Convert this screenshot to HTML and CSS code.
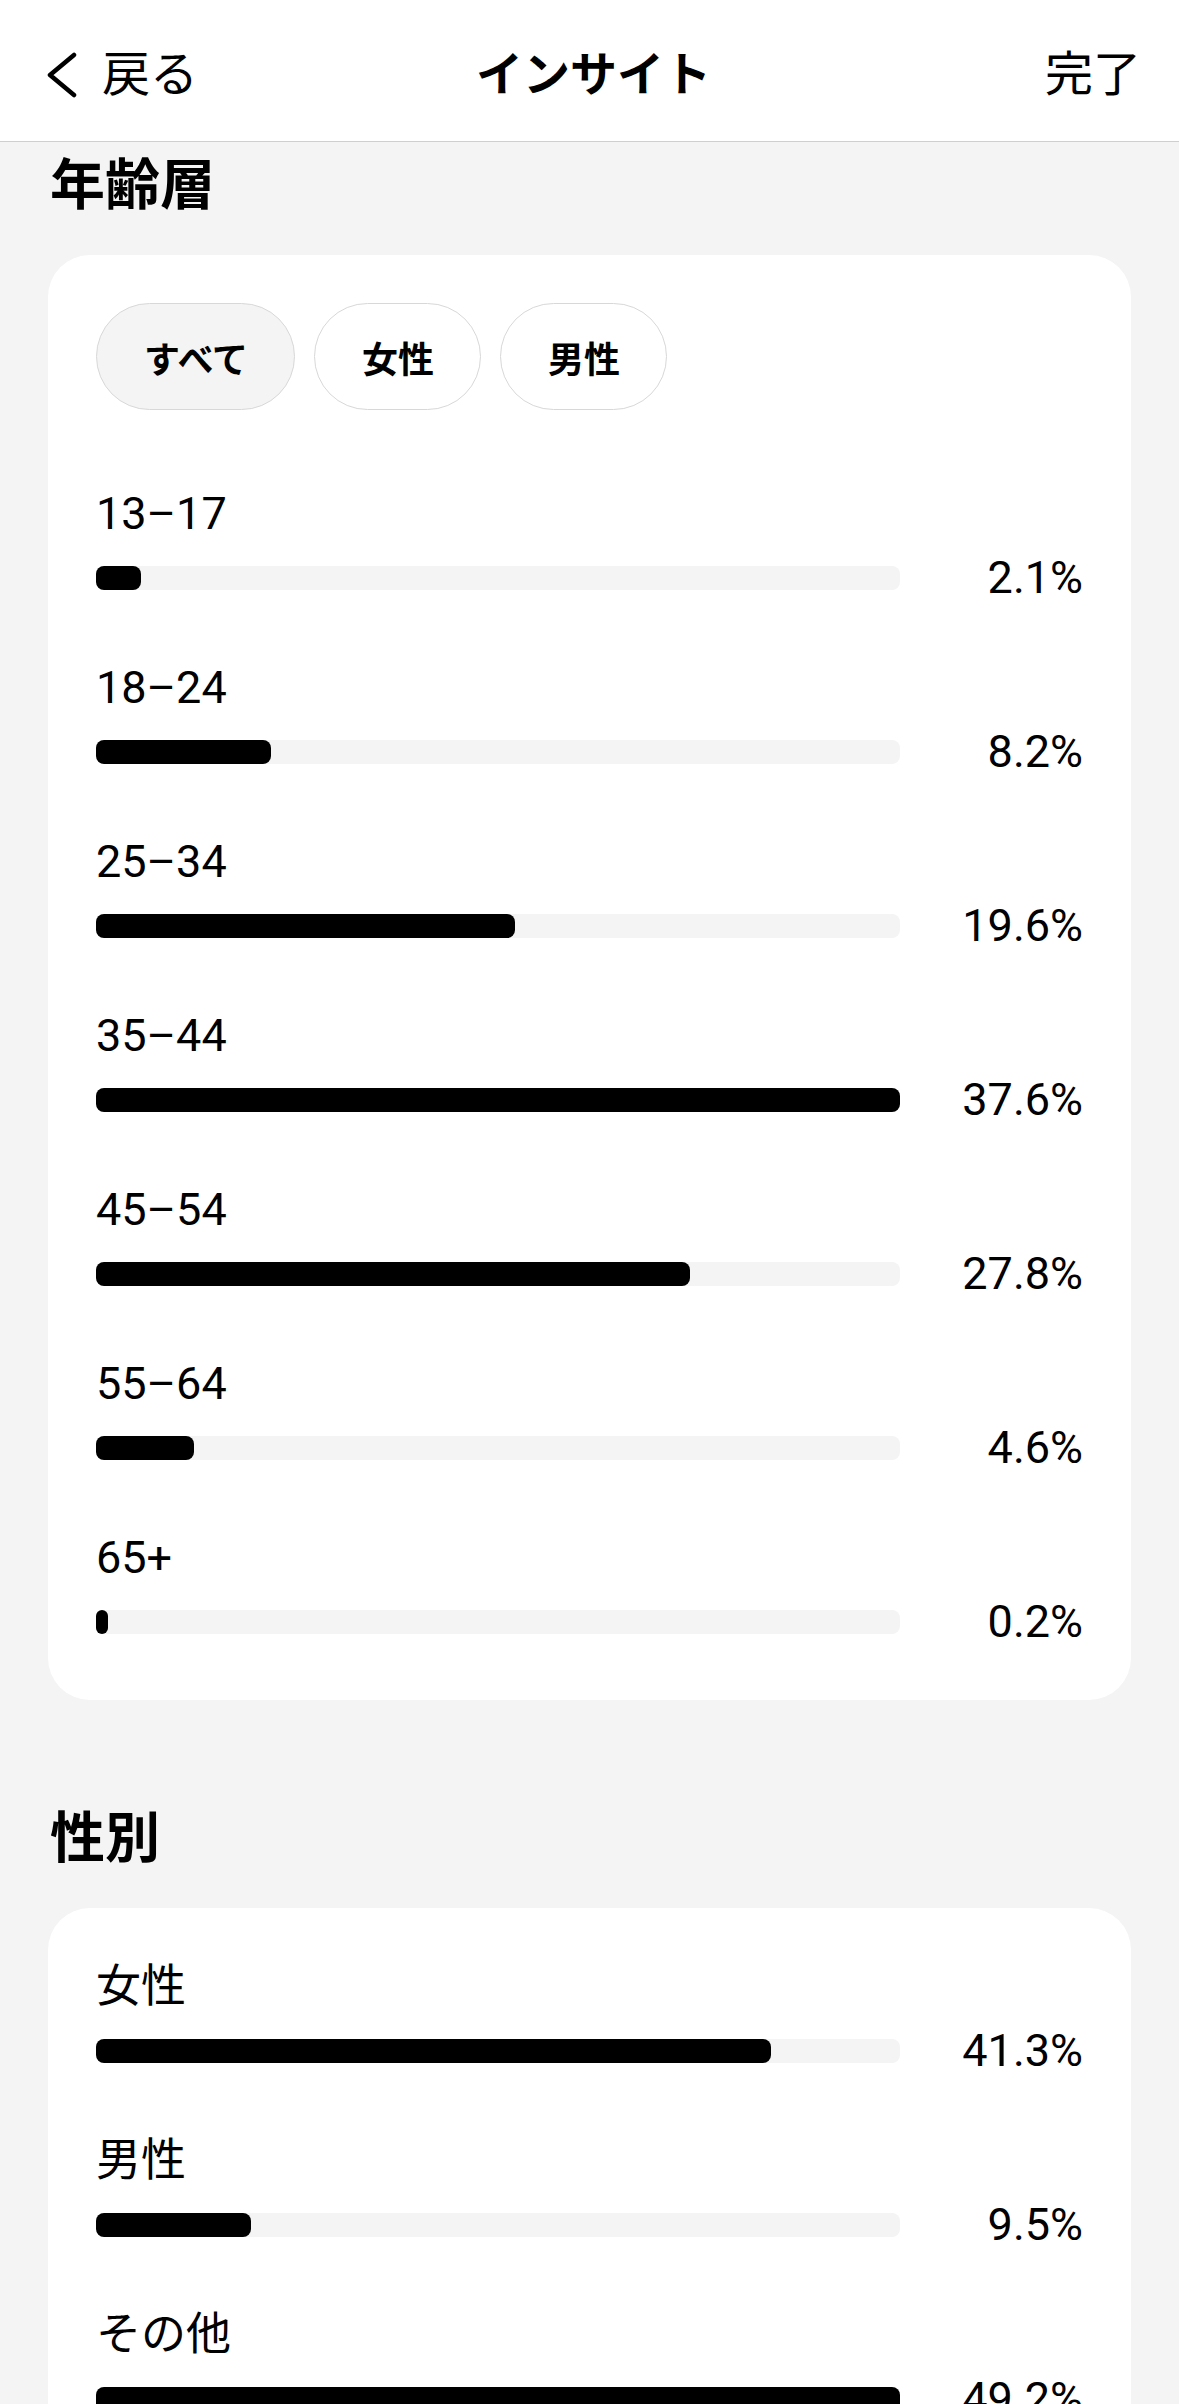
FILE: index.html
```html
<!DOCTYPE html>
<html lang="ja">
<head>
<meta charset="utf-8">
<title>インサイト</title>
<link rel="stylesheet" href="styles.css">
</head>
<body>
<div class="screen">
  <header class="nav">
    <div class="nav-left">
      <svg class="chev" width="32" height="46" viewBox="0 0 32 46" aria-hidden="true">
        <polyline points="28,3 4,23 28,43" fill="none" stroke="#000" stroke-width="4.5" stroke-linecap="round" stroke-linejoin="round"/>
      </svg>
      <span class="nav-back">戻る</span>
    </div>
    <div class="nav-title">インサイト</div>
    <div class="nav-right">完了</div>
  </header>

  <main class="content">
    <h2 class="section-title">年齢層</h2>
    <section class="card card-age">
      <div class="chips">
        <button class="chip chip-active">すべて</button>
        <button class="chip">女性</button>
        <button class="chip">男性</button>
      </div>
      <div class="rows">
        <div class="row">
          <div class="label">13–17</div>
          <div class="bar-row"><div class="track"><div class="fill" style="width:5.59%"></div></div><div class="pct">2.1%</div></div>
        </div>
        <div class="row">
          <div class="label">18–24</div>
          <div class="bar-row"><div class="track"><div class="fill" style="width:21.81%"></div></div><div class="pct">8.2%</div></div>
        </div>
        <div class="row">
          <div class="label">25–34</div>
          <div class="bar-row"><div class="track"><div class="fill" style="width:52.13%"></div></div><div class="pct">19.6%</div></div>
        </div>
        <div class="row">
          <div class="label">35–44</div>
          <div class="bar-row"><div class="track"><div class="fill" style="width:100%"></div></div><div class="pct">37.6%</div></div>
        </div>
        <div class="row">
          <div class="label">45–54</div>
          <div class="bar-row"><div class="track"><div class="fill" style="width:73.94%"></div></div><div class="pct">27.8%</div></div>
        </div>
        <div class="row">
          <div class="label">55–64</div>
          <div class="bar-row"><div class="track"><div class="fill" style="width:12.23%"></div></div><div class="pct">4.6%</div></div>
        </div>
        <div class="row">
          <div class="label">65+</div>
          <div class="bar-row"><div class="track"><div class="fill" style="width:0.53%"></div></div><div class="pct">0.2%</div></div>
        </div>
      </div>
    </section>

    <h2 class="section-title section-title-2">性別</h2>
    <section class="card card-gender">
      <div class="rows">
        <div class="row">
          <div class="label">女性</div>
          <div class="bar-row"><div class="track"><div class="fill" style="width:83.94%"></div></div><div class="pct">41.3%</div></div>
        </div>
        <div class="row">
          <div class="label">男性</div>
          <div class="bar-row"><div class="track"><div class="fill" style="width:19.31%"></div></div><div class="pct">9.5%</div></div>
        </div>
        <div class="row">
          <div class="label">その他</div>
          <div class="bar-row"><div class="track"><div class="fill" style="width:100%"></div></div><div class="pct">49.2%</div></div>
        </div>
      </div>
    </section>
  </main>
</div>
</body>
</html>
```

FILE: styles.css
```css
* { box-sizing: border-box; }

html, body {
  margin: 0;
  padding: 0;
}

body {
  background: #f4f4f4;
  color: #000;
  font-family: Roboto, "Noto Sans CJK JP", sans-serif;
}

.screen {
  height: 100vh;
  display: flex;
  flex-direction: column;
  overflow: hidden;
}

/* ---------- nav bar ---------- */
.nav {
  flex: 0 0 auto;
  height: 142px;
  background: #fff;
  border-bottom: 1px solid #cfcfcf;
  display: grid;
  grid-template-columns: 1fr auto 1fr;
  align-items: center;
  padding: 8px 38px 0 46px;
}

.nav-left {
  display: flex;
  align-items: center;
  gap: 24px;
}

.chev { display: block; }

.nav-back,
.nav-right {
  font-size: 48px;
  line-height: 56px;
  font-weight: 400;
}

.nav-right { justify-self: end; }

.nav-title {
  font-size: 47px;
  line-height: 56px;
  font-weight: 700;
  text-align: center;
}

/* ---------- content ---------- */
.content {
  flex: 1 1 auto;
  overflow: hidden;
  padding: 0 48px;
}

.section-title {
  margin: 13px 0 40px 2px;
  font-size: 55px;
  line-height: 60px;
  font-weight: 700;
}

.section-title-2 { margin-top: 108px; }

.card {
  background: #fff;
  border-radius: 42px;
  padding: 48px 48px 51px;
}

.card-gender { padding-top: 52px; }

/* ---------- chips ---------- */
.chips {
  display: flex;
  gap: 19px;
  margin-bottom: 77px;
}

.chip {
  height: 107px;
  padding: 0 46px 0 47px;
  border: 1px solid #d8d8d8;
  border-radius: 54px;
  background: #fff;
  color: #000;
  font-family: Roboto, "Noto Sans CJK JP", sans-serif;
  font-size: 36px;
  font-weight: 700;
}

.chip-active { background: #f4f4f4; }

/* ---------- bar rows ---------- */
.rows {
  display: flex;
  flex-direction: column;
  gap: 56px;
}

.label {
  font-size: 45px;
  line-height: 54px;
  margin-bottom: 10px;
}

.bar-row {
  height: 54px;
  display: flex;
  align-items: center;
}

.track {
  flex: 1 1 auto;
  height: 24px;
  border-radius: 8px;
  background: #f4f4f4;
}

.fill {
  height: 100%;
  min-width: 12px;
  border-radius: 8px;
  background: #000;
}

.pct {
  flex: 0 0 183px;
  text-align: right;
  font-size: 45px;
  line-height: 54px;
}
```
